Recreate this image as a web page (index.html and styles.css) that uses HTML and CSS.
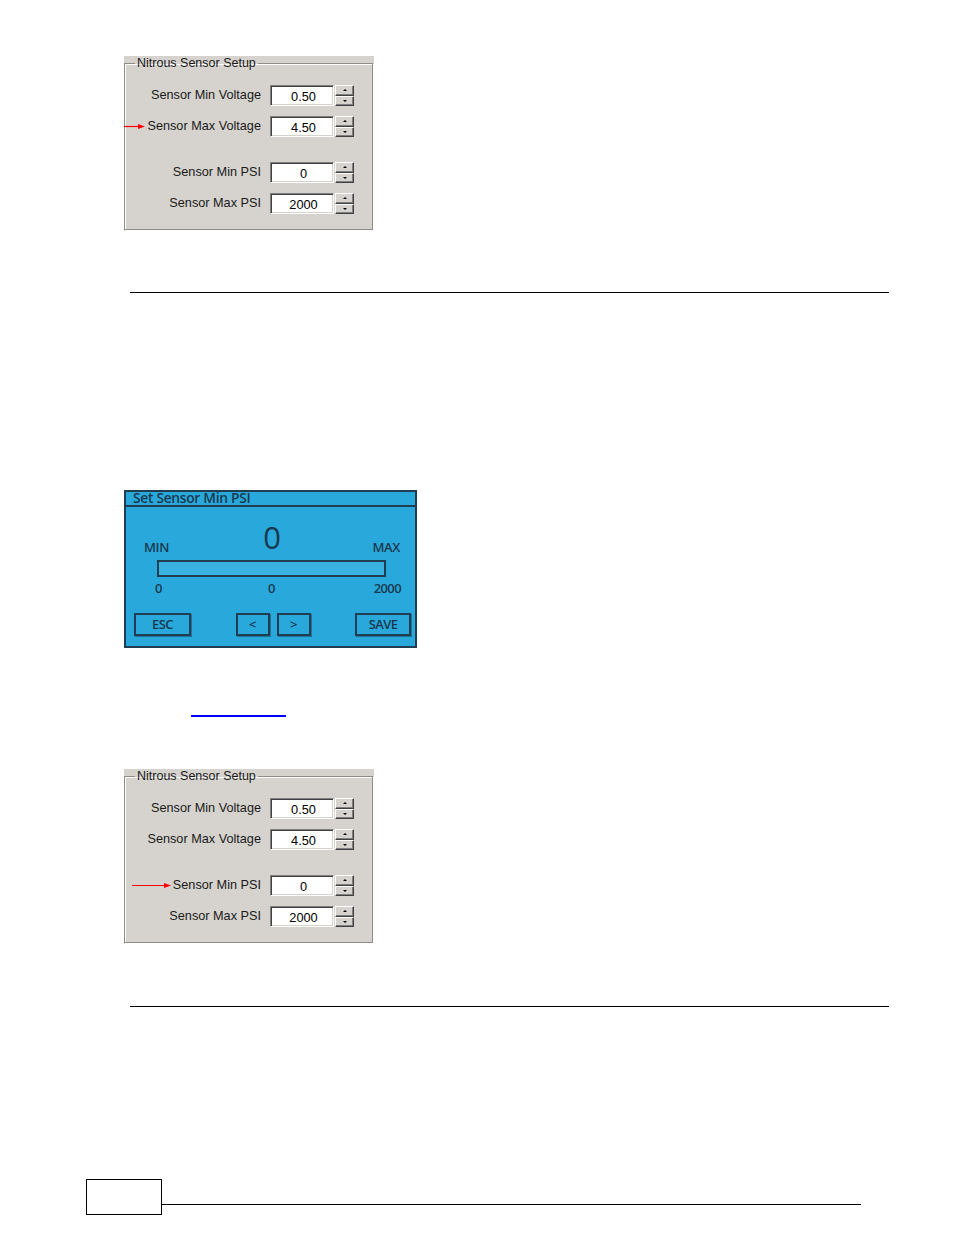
FILE: index.html
```html
<!DOCTYPE html>
<html>
<head>
<meta charset="utf-8">
<link rel="stylesheet" href="styles.css">
</head>
<body>
<div class="page">

  <div class="panel">
    <fieldset class="group">
      <legend>Nitrous Sensor Setup</legend>
      <div class="rows">
        <div class="row">
          <div class="label">Sensor Min Voltage</div>
          <div class="num">0.50</div>
          <div class="spin"><span class="up"><i></i></span><span class="down"><i></i></span></div>
        </div>
        <div class="row">
          <div class="label"><svg class="arrow" width="21" height="7" viewBox="0 0 21 7"><line x1="0" y1="3.5" x2="16" y2="3.5" stroke="#ff0000" stroke-width="1.2"/><polygon points="14,1 21,3.5 14,6" fill="#ff0000"/></svg>Sensor Max Voltage</div>
          <div class="num">4.50</div>
          <div class="spin"><span class="up"><i></i></span><span class="down"><i></i></span></div>
        </div>
        <div class="row row-gap">
          <div class="label">Sensor Min PSI</div>
          <div class="num">0</div>
          <div class="spin"><span class="up"><i></i></span><span class="down"><i></i></span></div>
        </div>
        <div class="row">
          <div class="label">Sensor Max PSI</div>
          <div class="num">2000</div>
          <div class="spin"><span class="up"><i></i></span><span class="down"><i></i></span></div>
        </div>
      </div>
    </fieldset>
  </div>

  <div class="rule rule-1"></div>

  <div class="lcd">
    <div class="lcd-title">Set Sensor Min PSI</div>
    <div class="lcd-head">
      <span class="lcd-min">MIN</span>
      <span class="lcd-value">0</span>
      <span class="lcd-max">MAX</span>
    </div>
    <div class="lcd-bar"></div>
    <div class="lcd-scale">
      <span>0</span>
      <span>0</span>
      <span class="lcd-scale-end">2000</span>
    </div>
    <div class="lcd-buttons">
      <span class="lcd-btn btn-esc">ESC</span>
      <span class="lcd-nav">
        <span class="lcd-btn btn-arrow">&lt;</span>
        <span class="lcd-btn btn-arrow">&gt;</span>
      </span>
      <span class="lcd-btn btn-save">SAVE</span>
    </div>
  </div>

  <a class="xref" href="#">&nbsp;</a>

  <div class="panel panel-3">
    <fieldset class="group">
      <legend>Nitrous Sensor Setup</legend>
      <div class="rows">
        <div class="row">
          <div class="label">Sensor Min Voltage</div>
          <div class="num">0.50</div>
          <div class="spin"><span class="up"><i></i></span><span class="down"><i></i></span></div>
        </div>
        <div class="row">
          <div class="label">Sensor Max Voltage</div>
          <div class="num">4.50</div>
          <div class="spin"><span class="up"><i></i></span><span class="down"><i></i></span></div>
        </div>
        <div class="row row-gap">
          <div class="label"><svg class="arrow" width="39" height="7" viewBox="0 0 39 7"><line x1="0" y1="3.5" x2="34" y2="3.5" stroke="#ff0000" stroke-width="1.2"/><polygon points="32,1 39,3.5 32,6" fill="#ff0000"/></svg>Sensor Min PSI</div>
          <div class="num">0</div>
          <div class="spin"><span class="up"><i></i></span><span class="down"><i></i></span></div>
        </div>
        <div class="row">
          <div class="label">Sensor Max PSI</div>
          <div class="num">2000</div>
          <div class="spin"><span class="up"><i></i></span><span class="down"><i></i></span></div>
        </div>
      </div>
    </fieldset>
  </div>

  <div class="rule rule-2"></div>

  <div class="footer">
    <div class="footer-box"></div>
    <div class="footer-line"></div>
  </div>

</div>
</body>
</html>
```

FILE: styles.css
```css
* { box-sizing: border-box; }

html, body {
  margin: 0;
  padding: 0;
  background: #ffffff;
}

body {
  font-family: "Liberation Sans", Arial, sans-serif;
  width: 954px;
  height: 1235px;
  overflow: hidden;
}

.page {
  padding-top: 56px;
  display: flex;
  flex-direction: column;
  align-items: flex-start;
}

/* ---------- Windows group box panel ---------- */
.panel {
  margin-left: 124px;
  width: 250px;
  height: 175px;
  background: #d6d3ce;
  display: flex;
}

.panel-3 { margin-top: 52px; }

.group {
  margin: 0;
  padding: 15px 0 0 0;
  width: 249px;
  height: 174px;
  border: 1px solid #8e8c88;
  box-shadow: inset 1px 1px 0 #ffffff, 1px 1px 0 #ffffff;
  min-width: 0;
}

.group legend {
  margin-left: 10px;
  padding: 0 2px;
  font-size: 12.5px;
  line-height: 14px;
  color: #1a1a1a;
}

.rows {
  display: flex;
  flex-direction: column;
  gap: 10px;
}

.row {
  display: grid;
  grid-template-columns: 136px 64px 19px;
  column-gap: 0;
  height: 21px;
  align-items: center;
}

.row-gap { margin-top: 15px; }

.label {
  display: flex;
  align-items: center;
  justify-content: flex-end;
  white-space: nowrap;
  font-size: 12.7px;
  line-height: 14px;
  color: #1a1a1a;
  padding-bottom: 2px;
}

.arrow {
  display: block;
  flex-shrink: 0;
  margin-right: 2px;
  margin-top: 2px;
}

.num {
  margin-left: 9px;
  width: 64px;
  height: 21px;
  background: #ffffff;
  border-top: 1px solid #808080;
  border-left: 1px solid #808080;
  border-right: 1px solid #ffffff;
  border-bottom: 1px solid #ffffff;
  box-shadow: inset 1px 1px 0 #404040, inset -1px -1px 0 #d6d3ce;
  font-size: 12.8px;
  line-height: 20px;
  text-align: center;
  color: #000;
  padding-top: 1px;
  padding-left: 3px;
}

.spin {
  margin-left: 10px;
  width: 19px;
  height: 21px;
  display: flex;
  flex-direction: column;
}

.spin span {
  flex: 1;
  display: flex;
  align-items: center;
  justify-content: center;
  background: #d6d3ce;
  border-top: 1px solid #ffffff;
  border-left: 1px solid #ffffff;
  border-right: 1px solid #404040;
  border-bottom: 1px solid #404040;
  box-shadow: inset -1px -1px 0 #808080;
}

.spin i {
  display: block;
  width: 0;
  height: 0;
  border-left: 2px solid transparent;
  border-right: 2px solid transparent;
}

.spin .up i { border-bottom: 2px solid #000; }
.spin .down i { border-top: 2px solid #000; }

/* ---------- Horizontal rules ---------- */
.rule {
  margin-left: 130px;
  width: 759px;
  height: 0;
  border-top: 1px solid #000;
}

.rule-1 { margin-top: 61px; }
.rule-2 { margin-top: 62px; }

/* ---------- LCD screen ---------- */
.lcd {
  margin-top: 197px;
  margin-left: 124px;
  width: 293px;
  height: 158px;
  background: #29a9db;
  border: 2px solid #1f3e51;
  font-family: "Open Sans", "Liberation Sans", sans-serif;
  font-weight: 600;
  color: #1a3950;
  display: flex;
  flex-direction: column;
}

.lcd-title {
  height: 15px;
  border-bottom: 2px solid #1f3e51;
  padding-left: 7px;
  font-size: 13.8px;
  line-height: 12px;
  letter-spacing: -0.3px;
  white-space: nowrap;
}

.lcd-head {
  margin: 14px 15px 0 18px;
  display: grid;
  grid-template-columns: 1fr auto 1fr;
  align-items: end;
  height: 33px;
}

.lcd-min, .lcd-max {
  font-size: 13px;
  line-height: 13px;
  letter-spacing: -0.4px;
}

.lcd-max { justify-self: end; }

.lcd-value {
  font-size: 31px;
  line-height: 33px;
  font-weight: 400;
}

.lcd-bar {
  margin: 6px 29px 0 31px;
  height: 17px;
  border: 2px solid #1f3e51;
  background: #3ab2e1;
}

.lcd-scale {
  margin: 5px 14px 0 29px;
  display: grid;
  grid-template-columns: 113px auto 1fr;
  font-size: 13px;
  line-height: 13px;
  letter-spacing: -0.6px;
}

.lcd-scale-end { justify-self: end; }

.lcd-buttons {
  margin: 18px 4px 0 8px;
  display: flex;
  justify-content: space-between;
}

.lcd-nav {
  display: flex;
  gap: 7px;
}

.lcd-btn {
  height: 23px;
  border: 2px solid #1f3e51;
  box-shadow: 1px 1px 0 rgba(20, 50, 70, 0.45);
  display: flex;
  align-items: center;
  justify-content: center;
  font-size: 13px;
  line-height: 13px;
  letter-spacing: -0.6px;
}

.btn-esc { width: 57px; }
.btn-save { width: 56px; }
.btn-arrow { width: 34px; }

/* ---------- Cross reference link ---------- */
.xref {
  display: block;
  margin-top: 67px;
  margin-left: 191px;
  width: 95px;
  height: 2px;
  border-bottom: 2px solid #0000ff;
  font-size: 1px;
  line-height: 0;
  overflow: hidden;
  color: #0000ff;
  text-decoration: none;
}

/* ---------- Footer ---------- */
.footer {
  margin-top: 172px;
  margin-left: 86px;
  display: flex;
  align-items: flex-start;
}

.footer-box {
  width: 76px;
  height: 36px;
  border: 1px solid #000;
}

.footer-line {
  margin-top: 25px;
  width: 699px;
  height: 0;
  border-top: 1px solid #000;
}
```
